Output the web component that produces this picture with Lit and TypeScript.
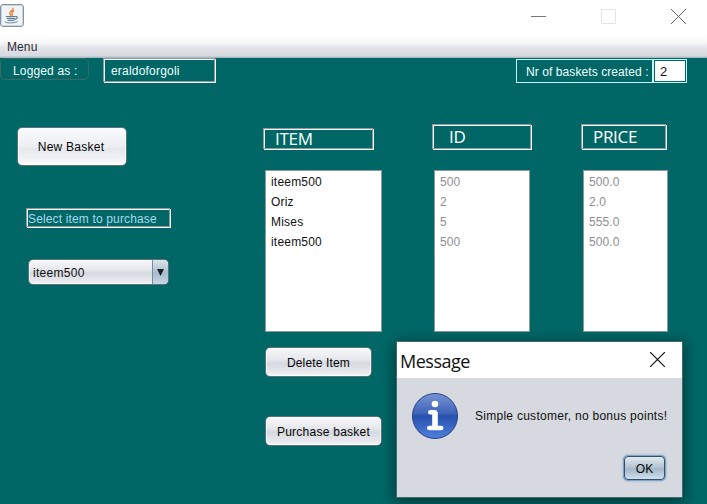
import { LitElement, html, css, svg } from "lit";
import { customElement, property } from "lit/decorators.js";

const etched = css`
  .etched {
    border: 1px solid #93989c;
    box-shadow: 1px 1px 0 #f2f7f7, inset 1px 1px 0 #f2f7f7;
  }
`;

@customElement("list-column")
class ListColumn extends LitElement {
  @property() label = "";
  @property({ type: Array }) rows: string[] = [];

  static styles = [etched, css`
    :host { display: flex; flex-direction: column; align-items: flex-start; }
    :host([kind="item"]) { width: 119px; --head: 110px; --headh: 21px; --list: 117px; --pad: 11px; --ink: #111; --ls: 0.2px; }
    :host([kind="id"]) { width: 100px; --head: 99px; --headh: 25px; --list: 96px; --pad: 16px; --ink: #8e8e93; --ls: 0.1px; }
    :host([kind="price"]) { width: 87px; --head: 85px; --headh: 25px; --list: 85px; --pad: 11px; --ink: #8e8e93; --ls: 0.1px; }
    .area { height: 26px; display: flex; align-items: flex-end; }
    .head {
      box-sizing: border-box; width: var(--head); height: var(--headh); padding: 1px 0 0 var(--pad);
      margin-bottom: 1px; color: #fff; font: 500 17px/22px "Open Sans", sans-serif; letter-spacing: -0.3px;
      display: flex; align-items: center; white-space: nowrap;
    }
    .list {
      box-sizing: border-box; width: var(--list); height: 162px; margin: 20px 0 0 2px;
      border: 1px solid #8a9a9f; background: #fff; padding: 1px 0 0 5px; color: var(--ink);
      font: 12px/20px "Liberation Sans", Arial, sans-serif; letter-spacing: var(--ls);
    }
  `];

  render() {
    return html`
      <div class="area"><div class="head etched"><span>${this.label}</span></div></div>
      <div class="list">${this.rows.map((r) => html`<div>${r}</div>`)}</div>
      <slot></slot>
    `;
  }
}

@customElement("app-root")
class AppRoot extends LitElement {
  static styles = [etched, css`
    :host {
      display: flex; flex-direction: column; position: relative; width: 707px; height: 504px; overflow: hidden;
      background: #006766; color: #111; font: 12px/14px "Liberation Sans", Arial, sans-serif;
    }
    * { box-sizing: border-box; }
    svg { display: block; }
    button { font: inherit; color: #050505; padding: 0; white-space: nowrap; }
    .titlebar { height: 35px; flex: none; background: #fff; display: flex; justify-content: space-between; }
    .java { margin-top: 4px; }
    .controls { margin: 9px 21px 0 0; display: flex; gap: 55px; }
    .menubar {
      height: 23px; flex: none; padding: 5px 7px 0; color: #2b2b33; letter-spacing: 0.1px;
      background: linear-gradient(#fff 0, #f8f8fa 30%, #e4e5ea 55%, #d6d9df 90%, #9fb5ba 100%);
    }
    .status { height: 26px; flex: none; display: flex; align-items: flex-start; color: #f0ffff; white-space: nowrap; }
    .logged {
      width: 89px; height: 22px; padding: 5px 0 0 12px; border: 1px solid #29706f;
      border-radius: 5px; box-shadow: inset 0 0 0 1px #16605f; letter-spacing: 0.15px;
    }
    .user { margin: 0 1px 0 14px; width: 112px; height: 24px; padding: 5px 0 0 7px; letter-spacing: 0.2px; }
    .count { margin: 1px 0 0 auto; width: 137px; height: 24px; padding: 5px 0 0 9px; border: 1px solid #c5f4f4; letter-spacing: 0.08px; }
    .num { margin: 1px 20px 0 0; width: 34px; height: 24px; border: 1px solid #c5f4f4; padding: 1px; }
    .num div { height: 20px; background: #fff; color: #111; font-size: 13px; line-height: 21px; padding-left: 5px; }
    .body { flex: 1; display: flex; align-items: flex-start; padding-top: 40px; }
    .side { width: 263px; display: flex; flex-direction: column; align-items: flex-start; }
    .btn {
      border: 1px solid #58727b; border-radius: 5px; box-shadow: inset 0 0 0 1px #ffffff90;
      background: linear-gradient(#f8f8fa, #e6e8ed 40%, #d6d9df 55%, #e9ebf0 90%, #f8f8fa);
    }
    .new { margin: 3px 0 0 17px; width: 110px; height: 39px; letter-spacing: 0.25px; padding-right: 2px; background: linear-gradient(#fafafb, #eceef2 50%, #e4e7ec 56%, #f2f3f7 85%, #fff); }
    .hint { margin: 42px 0 0 26px; width: 144px; height: 19px; padding: 3px 0 0 1px; margin-bottom: 1px; color: #a9d9f0; white-space: nowrap; letter-spacing: 0.15px; }
    .combo { margin: 31px 0 0 28px; width: 141px; height: 26px; display: flex; align-items: stretch; overflow: hidden; }
    .combo span { flex: 1; padding: 6px 0 0 4px; letter-spacing: 0.3px; }
    .combo i { width: 16px; border-left: 1px solid #758e9f; background: linear-gradient(#dce5ec, #a9bccb 55%, #c8d8e4); display: flex; align-items: center; justify-content: center; }
    .del { margin: 15px 0 0 2px; width: 107px; height: 30px; padding-top: 1px; letter-spacing: 0.15px; }
    .buy { margin: 39px 0 0 2px; width: 117px; height: 30px; padding-top: 1px; letter-spacing: 0.25px; }
    .id { margin-left: 50px; }
    .price { margin-left: 49px; }
    .dialog {
      position: absolute; left: 396px; top: 341px; width: 287px; height: 157px; background: #d6d9df;
      border: 1px solid #3f6a70; box-shadow: 0 3px 14px 1px #0007; display: flex; flex-direction: column;
    }
    .dhead { height: 36px; flex: none; background: #fff; display: flex; justify-content: space-between; align-items: flex-start; padding: 10px 17px 0 3px; }
    .dhead b { font: 18px/20px "Open Sans", "Noto Sans", sans-serif; letter-spacing: -0.5px; color: #111; margin-top: -1px; }
    .msg { display: flex; padding: 14px 0 0 14px; align-items: center; gap: 16px; white-space: nowrap; letter-spacing: 0.27px; }
    .ok {
      align-self: flex-end; margin: 16px 17px 0 0; width: 41px; height: 24px; padding-top: 1px; border: 1px solid #33506d; border-radius: 4px;
      box-shadow: 0 0 0 1px #7ca5c9, 0 0 2px 1px #7ca5c9; background: linear-gradient(#e2eaf0, #b6c6d3 45%, #a5b8c7 55%, #cfdfec);
    }
  `];

  private java = svg`
    <rect x="0.5" y="0.5" width="23" height="22" rx="2.5" fill="#f1f4f7" stroke="#8393a3"/>
    <rect x="1.5" y="1.5" width="21" height="20" rx="2" fill="none" stroke="#cdd6df"/>
    <g fill="none" stroke-linecap="round">
      <path d="M13 4.300c.5 2-3.800 3-3.300 5.200.2.800.8 1.300 1.300 1.800M13.800 7c-2.300 1-2.300 1.800-1.500 2.700.4.600.1 1.100-.3 1.600" stroke="#e5863f" stroke-width="1.400"/>
      <path d="M6.300 12.500H15.300M7 14.300H14.500M8 16.300H13.700M15.500 12.500c2.700-.5 2.200 2.300-.8 2.800" stroke="#5f7d92" stroke-width="1.200"/>
      <path d="M5 17.700c-1 1.700 10 1.700 12.300-.1" stroke="#5f7d92"/>
    </g>`;

  render() {
    return html`
      <div class="titlebar">
        <svg class="java" width="24" height="23">${this.java}</svg>
        <div class="controls">
          <svg width="15" height="15"><path d="M0 7.5H15" stroke="#777"/></svg>
          <svg width="15" height="15"><path d="M.5.5h14v14H.5z" fill="none" stroke="#e4e4e4"/></svg>
          <svg width="15" height="15"><path d="M0 0L15 15M15 0L0 15" stroke="#666"/></svg>
        </div>
      </div>
      <div class="menubar">Menu</div>
      <div class="status">
        <div class="logged">Logged as :</div>
        <div class="user etched">eraldoforgoli</div>
        <div class="count">Nr of baskets created :</div>
        <div class="num"><div>2</div></div>
      </div>
      <div class="body">
        <div class="side">
          <button class="btn new">New Basket</button>
          <div class="hint etched">Select item to purchase</div>
          <div class="btn combo">
            <span>iteem500</span>
            <i><svg width="7" height="7"><path d="M0 0H7L3.500 7z" fill="#18202a"/></svg></i>
          </div>
        </div>
        <list-column kind="item" label="ITEM" .rows=${["iteem500", "Oriz", "Mises", "iteem500"]}>
          <button class="btn del">Delete Item</button>
          <button class="btn buy">Purchase basket</button>
        </list-column>
        <list-column class="id" kind="id" label="ID" .rows=${["500", "2", "5", "500"]}></list-column>
        <list-column class="price" kind="price" label="PRICE" .rows=${["500.0", "2.0", "555.0", "500.0"]}></list-column>
      </div>
      <div class="dialog">
        <div class="dhead">
          <b>Message</b>
          <svg width="15" height="15"><path d="M0 0L15 15M15 0L0 15" stroke="#111" stroke-width="1.200"/></svg>
        </div>
        <div class="msg">
          <svg width="48" height="48" viewBox="0 0 48 48">
            <defs>
              <linearGradient id="g" x2="0" y2="1"><stop offset="0" stop-color="#7894d4"/><stop offset=".45" stop-color="#3c62b9"/><stop offset=".5" stop-color="#2850ae"/><stop offset="1" stop-color="#4f80e0"/></linearGradient>
            </defs>
            <circle cx="24" cy="24" r="22.500" fill="url(#g)" stroke="#263f80"/>
            <circle cx="24" cy="12" r="3.300" fill="#fff"/>
            <path d="M19.300 20.300H24V36M18.300 36H30.200" fill="none" stroke="#fff" stroke-width="4.600" stroke-linecap="round" stroke-linejoin="round"/>
            <path d="M24 20V36" stroke="#fff" stroke-width="5.500"/>
          </svg>
          <span>Simple customer, no bonus points!</span>
        </div>
        <button class="ok">OK</button>
      </div>
    `;
  }
}
